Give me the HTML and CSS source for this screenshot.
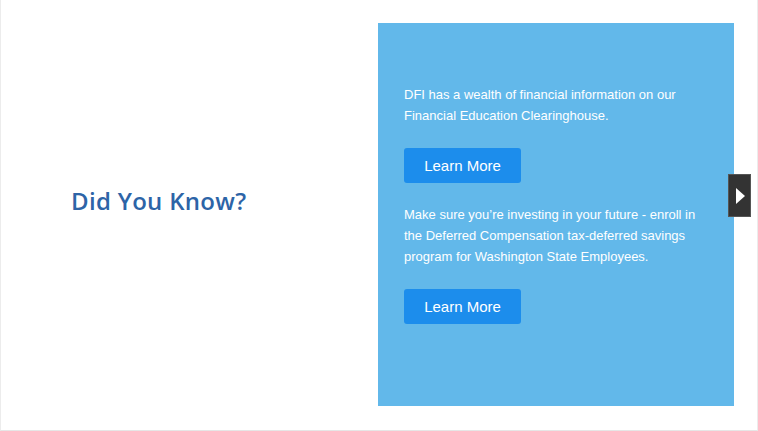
FILE: index.html
```html
<!DOCTYPE html>
<html>
<head>
<meta charset="utf-8">
<link rel="stylesheet" href="styles.css">
</head>
<body>
<div class="frame">
  <div class="intro">
    <h2 class="title">Did You Know?</h2>
  </div>
  <div class="panel">
    <p class="copy">DFI has a wealth of financial information on our Financial Education Clearinghouse.</p>
    <a class="btn" href="#">Learn More</a>
    <p class="copy second">Make sure you’re investing in your future - enroll in the Deferred Compensation tax-deferred savings program for Washington State Employees.</p>
    <a class="btn" href="#">Learn More</a>
  </div>
  <button class="next" aria-label="Next">
    <svg width="10" height="16" viewBox="0 0 10 16"><path d="M1 0 L10 8 L1 16 Z" fill="#fff"/></svg>
  </button>
</div>
</body>
</html>
```

FILE: styles.css
```css
html, body {
  margin: 0;
  padding: 0;
  background: #fff;
}
.frame {
  position: relative;
  width: 758px;
  height: 431px;
  box-sizing: border-box;
  border-left: 1px solid #ececec;
  border-right: 1px solid #ececec;
  border-bottom: 1px solid #e6e6e6;
  display: flex;
  align-items: flex-start;
}
.intro {
  width: 377px;
  height: 400px;
  box-sizing: border-box;
  padding-left: 70px;
  display: flex;
  align-items: center;
}
.title {
  margin: 0;
  font-family: "Open Sans", Lato, sans-serif;
  font-weight: 600;
  font-size: 24px;
  color: #2d64a7;
  letter-spacing: 0.3px;
}
.panel {
  margin-top: 23px;
  width: 356px;
  height: 383px;
  box-sizing: border-box;
  background: #62b8ea;
  padding: 61px 30px 0 26px;
  font-family: "Liberation Sans", Arial, sans-serif;
}
.copy {
  margin: 0;
  color: #fff;
  font-size: 13px;
  line-height: 21px;
}
.second {
  margin-top: 21px;
}
.btn {
  display: block;
  margin-top: 22px;
  width: 117px;
  height: 35px;
  line-height: 35px;
  text-align: center;
  background: #1c8dec;
  color: #fff;
  font-size: 15px;
  text-decoration: none;
  border-radius: 3px;
}
.second + .btn {
  margin-top: 22px;
}
.next {
  position: absolute;
  left: 727px;
  top: 174px;
  width: 23px;
  height: 43px;
  padding: 0;
  background: #333;
  border: 1px solid #555;
  display: flex;
  align-items: center;
  justify-content: center;
}
```
